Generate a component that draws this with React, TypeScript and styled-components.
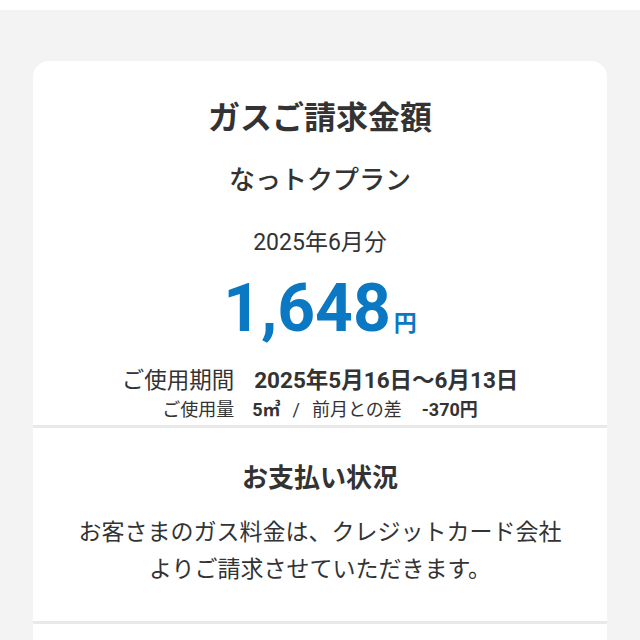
import React from 'react';
import styled, { createGlobalStyle } from 'styled-components';

const GlobalStyle = createGlobalStyle`
  html, body {
    margin: 0;
    padding: 0;
    background: #f3f3f3;
  }
  body {
    font-family: Roboto, "Noto Sans CJK JP", "Noto Sans", sans-serif;
    color: #333333;
  }
`

const TopBar = styled.div`
  height: 10px;
  background: #ffffff;
`

const Page = styled.main`
  padding: 51px 33px 0;
`

const Card = styled.div`
  background: #ffffff;
  border-radius: 16px 16px 0 0;
  overflow: hidden;
`

const Section = styled.section<{ $pt: number; $pb: number }>`
  display: flex;
  flex-direction: column;
  align-items: center;
  padding: ${p => p.$pt}px 16px ${p => p.$pb}px;
  & + & {
    border-top: 3px solid #e9e9e9;
  }
`

const Title = styled.h1`
  margin: 0;
  font-size: 32px;
  line-height: 42px;
  font-weight: 700;
  color: #333333;
`

const Plan = styled.h2`
  margin: 24px 0 0;
  font-size: 26px;
  line-height: 34px;
  font-weight: 500;
  color: #333333;
`

const Month = styled.div`
  margin-top: 32px;
  font-size: 23px;
  line-height: 28px;
`

const Amount = styled.div`
  margin-top: 19px;
  display: flex;
  align-items: baseline;
  color: #0b78c4;
  font-weight: 700;
`

const Digits = styled.span`
  font-size: 66px;
  line-height: 66px;
`

const Yen = styled.span`
  font-size: 23px;
  margin-left: 3px;
`

const InfoRow = styled.div<{ $size: number; $lh: number; $mt: number }>`
  margin-top: ${p => p.$mt}px;
  font-size: ${p => p.$size}px;
  line-height: ${p => p.$lh}px;
  display: flex;
  align-items: baseline;
  white-space: nowrap;
`

const Label = styled.span<{ $gap?: number }>`
  font-weight: 400;
  margin-right: ${p => p.$gap ?? 0}px;
`

const Value = styled.span<{ $gap?: number }>`
  font-weight: 700;
  margin-right: ${p => p.$gap ?? 0}px;
`

const Slash = styled.span`
  margin-right: 12px;
`

const SubTitle = styled.h2`
  margin: 0;
  font-size: 26px;
  line-height: 34px;
  font-weight: 700;
  color: #333333;
`

const Body = styled.p`
  margin: 19px 0 0;
  font-size: 23px;
  line-height: 37px;
  text-align: center;
  color: #333333;
`

export default function App() {
  return (
    <>
      <GlobalStyle />
      <TopBar />
      <Page>
        <Card>
          <Section $pt={36} $pb={3}>
            <Title>ガスご請求金額</Title>
            <Plan>なっトクプラン</Plan>
            <Month>2025年6月分</Month>
            <Amount>
              <Digits>1,648</Digits>
              <Yen>円</Yen>
            </Amount>
            <InfoRow $size={22.5} $lh={30} $mt={23}>
              <Label $gap={20}>ご使用期間</Label>
              <Value>2025年5月16日〜6月13日</Value>
            </InfoRow>
            <InfoRow $size={18} $lh={24} $mt={3}>
              <Label $gap={18}>ご使用量</Label>
              <Value $gap={12}>5㎥</Value>
              <Slash>/</Slash>
              <Label $gap={20}>前月との差</Label>
              <Value>-370円</Value>
            </InfoRow>
          </Section>
          <Section $pt={33} $pb={33}>
            <SubTitle>お支払い状況</SubTitle>
            <Body>
              お客さまのガス料金は、クレジットカード会社
              <br />
              よりご請求させていただきます。
            </Body>
          </Section>
          <Section $pt={40} $pb={0} />
        </Card>
      </Page>
    </>
  );
}
